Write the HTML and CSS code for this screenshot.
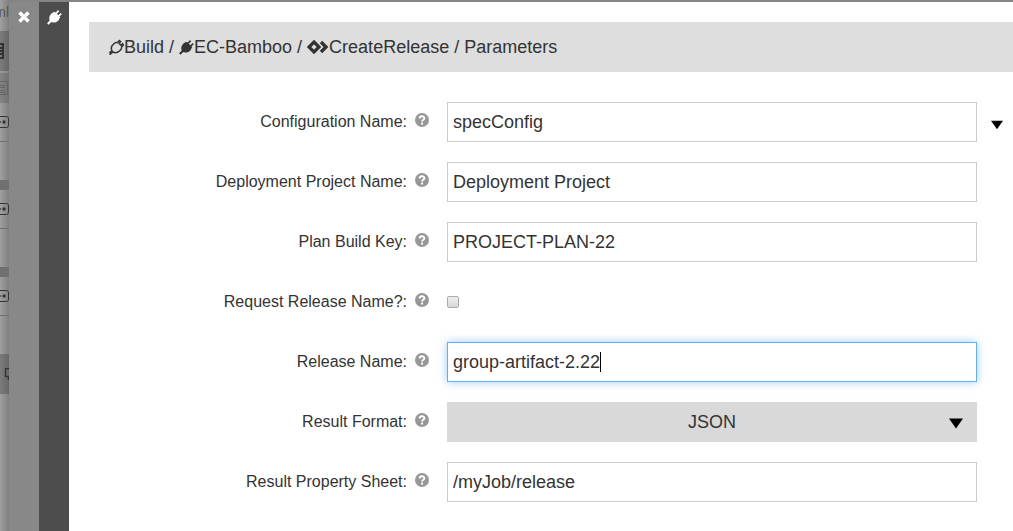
FILE: index.html
```html
<!DOCTYPE html>
<html lang="en">
<head>
<meta charset="utf-8">
<meta name="viewport" content="width=device-width, initial-scale=1">
<title>Parameters</title>
<link rel="stylesheet" href="styles.css">
</head>
<body>
<svg class="defs" aria-hidden="true">
  <symbol id="help" viewBox="0 0 14 14"><circle cx="7" cy="7" r="7" fill="#979797"/><path d="M4.6 5.4C4.6 2.5 9.4 2.5 9.4 5.2C9.4 6.8 7.1 6.7 7.1 8.6" fill="none" stroke="#fff" stroke-width="1.9"/><path d="M6.1 9.6h2v1.9h-2z" fill="#fff"/></symbol>
  <symbol id="plug" viewBox="0 0 15 16"><path d="M.8 15L4 11.8" fill="none" stroke="currentColor" stroke-width="2"/><path d="M3 12.8C1.8 9.8 2 7 4 5C5.3 3.6 6.5 3.2 7.7 3.4L12.5 8.3C12.5 9.8 12 11 10.8 12C8.7 13.9 5.6 13.9 3 12.8Z" fill="currentColor"/><path d="M8.8 4.8L11.6 1.6M11.2 7.4L14.3 4.6M7.3 3.3L12.7 8.7" fill="none" stroke="currentColor" stroke-width="1.6"/></symbol>
  <symbol id="down" viewBox="0 0 14 10"><path d="M0 0h14L7 10z"/></symbol>
</svg>
<div class="app">
  <div class="backdrop" aria-hidden="true">
    <div class="title">ml</div>
    <div class="tile"><svg class="list-icon" viewBox="0 0 9 16"><path d="M0 1H3V15H0M0 5H2M0 8H2M0 11H2" fill="none" stroke="#333" stroke-width="2"/></svg></div>
    <div class="tile tile-small"><svg class="list-icon" viewBox="0 0 9 16"><path d="M0 1.5H7.5V14.5H0M0 5.5H4.5V7.5H0M0 10.5H4.5V12.5H0" fill="none" stroke="#656565"/></svg></div>
    <div class="card"><div class="card-head"><svg viewBox="0 0 9 12"><path d="M0 .5H6.5Q8.5 .5 8.5 2.5V9.5Q8.5 11.5 6.5 11.5H0" fill="none" stroke="#333"/><circle cx="4" cy="6" r="1.7" fill="#333"/><path d="M0 5h1v2H0z" fill="#555"/></svg></div></div>
    <div class="card"><div class="card-head"><svg viewBox="0 0 9 12"><path d="M0 .5H6.5Q8.5 .5 8.5 2.5V9.5Q8.5 11.5 6.5 11.5H0" fill="none" stroke="#333"/><circle cx="4" cy="6" r="1.7" fill="#333"/><path d="M0 5h1v2H0z" fill="#555"/></svg></div></div>
    <div class="card card-last"><div class="card-head"><svg viewBox="0 0 9 12"><path d="M0 .5H6.5Q8.5 .5 8.5 2.5V9.5Q8.5 11.5 6.5 11.5H0" fill="none" stroke="#333"/><circle cx="4" cy="6" r="1.7" fill="#333"/><path d="M0 5h1v2H0z" fill="#555"/></svg></div></div>
    <div class="tile"><svg viewBox="0 0 9 12"><path d="M9 .5H5.5V8.5H8.5V12" fill="none" stroke="#333" stroke-width="1.4"/></svg></div>
  </div>
  <div class="rail">
    <button class="rail-button" type="button" aria-label="Close"><svg class="close-icon" viewBox="0 0 12 12"><path d="M1.5 1.5L10.5 10.5M10.5 1.5L1.5 10.5" stroke="#fff" stroke-width="3.4" fill="none"/></svg></button>
  </div>
  <div class="rail rail-dark">
    <button class="rail-button" type="button" aria-label="Plugin"><svg class="plug-icon"><use href="#plug"/></svg></button>
  </div>
  <main class="panel">
    <nav class="crumbs" aria-label="Breadcrumb">
      <a href="#build"><svg class="crumb-icon" viewBox="0 0 15 16"><path d="M1.2 15.2L1 13.2L3 11.9C1.6 9 2.4 6.8 4.6 5C5.8 3.6 7 3.2 8.4 3.6L10.4 1.6L11.6 2.6L10.2 4.6L12 6.2L13.6 4.6L14.4 6L12.6 8C12.8 9.8 11.8 11 10.4 12C8.5 13.8 6 14 4 13Z" fill="none" stroke="currentColor" stroke-width="1.5"/></svg>Build</a>&nbsp;/&nbsp;<a href="#plugin"><svg class="crumb-icon"><use href="#plug"/></svg>EC-Bamboo</a>&nbsp;/&nbsp;<a href="#procedure"><svg class="procedure-icon" viewBox="0 0 22 14"><path d="M7 2L12 7L7 12L2 7Z" fill="none" stroke="currentColor" stroke-width="3.2"/><path d="M14 2L19 7L14 12" fill="none" stroke="currentColor" stroke-width="3.4"/></svg>CreateRelease</a>&nbsp;/&nbsp;<span>Parameters</span>
    </nav>
    <form class="form">
      <div class="row">
        <label for="config">Configuration Name:</label><svg class="help"><use href="#help"/></svg>
        <input class="text" id="config" type="text" value="specConfig">
        <button class="open" type="button" aria-label="Choose configuration"><svg class="open-icon"><use href="#down"/></svg></button>
      </div>
      <div class="row">
        <label for="project">Deployment Project Name:</label><svg class="help"><use href="#help"/></svg>
        <input class="text" id="project" type="text" value="Deployment Project">
      </div>
      <div class="row">
        <label for="plan">Plan Build Key:</label><svg class="help"><use href="#help"/></svg>
        <input class="text" id="plan" type="text" value="PROJECT-PLAN-22">
      </div>
      <div class="row">
        <label for="request">Request Release Name?:</label><svg class="help"><use href="#help"/></svg>
        <input class="check" id="request" type="checkbox">
      </div>
      <div class="row">
        <label for="release">Release Name:</label><svg class="help"><use href="#help"/></svg>
        <div class="field"><input class="text active" id="release" type="text" value="group-artifact-2.22"><span class="caret"></span></div>
      </div>
      <div class="row">
        <label for="format">Result Format:</label><svg class="help"><use href="#help"/></svg>
        <div class="field"><select class="select" id="format"><option>JSON</option></select><svg class="select-icon"><use href="#down"/></svg></div>
      </div>
      <div class="row">
        <label for="sheet">Result Property Sheet:</label><svg class="help"><use href="#help"/></svg>
        <input class="text" id="sheet" type="text" value="/myJob/release">
      </div>
    </form>
  </main>
</div>
</body>
</html>
```
FILE: styles.css
```css
* { box-sizing: border-box; }
body {
  margin: 0;
  color: #333;
  font-family: "Liberation Sans", Arial, sans-serif;
  font-size: 16px;
}
svg { display: block; }
button { padding: 0; border: 0; background: none; }
.defs { position: absolute; width: 0; height: 0; }

.app {
  display: grid;
  grid-template-columns: 9px 30px 30px 1fr;
  min-height: 100vh;
}
.rail, .panel { border-top: 2px solid #848484; }

.backdrop {
  display: flex;
  flex-direction: column;
  overflow: hidden;
  background: linear-gradient(to right, #a0a0a0, #808080);
}
.backdrop svg { width: 9px; height: 12px; flex: none; }
.backdrop .list-icon { height: 16px; }
.title {
  display: flex;
  justify-content: flex-end;
  height: 31px;
  padding-top: 3px;
  font-size: 14px;
  line-height: 18px;
  color: #555;
}
.tile {
  display: flex;
  align-items: center;
  height: 40px;
  background: linear-gradient(to right, #7c7c7c, #666);
}
.tile-small {
  height: 30px;
  margin-top: 2px;
  background: linear-gradient(to right, #858585, #707070);
}
.card { height: 87px; border-bottom: 10px solid #707070; }
.card-last { height: 77px; border-bottom: 0; }
.card-head {
  display: flex;
  align-items: center;
  height: 39px;
  border-bottom: 1px solid #707070;
}

.rail { background: #888; }
.rail-dark { background: #4d4d4d; }
.rail-button {
  display: grid;
  place-items: center;
  width: 30px;
  height: 30px;
  color: #fff;
}
.close-icon { width: 12px; height: 12px; }
.plug-icon { width: 15px; height: 16px; }

.panel { padding: 20px 0 29px 20px; background: #fff; }
.crumbs {
  display: flex;
  align-items: center;
  height: 50px;
  padding-left: 20px;
  background: #dedede;
  font-size: 18px;
  white-space: nowrap;
}
.crumbs a {
  display: flex;
  align-items: center;
  color: inherit;
  text-decoration: none;
}
.crumb-icon { width: 15px; height: 16px; }
.procedure-icon { width: 22px; height: 14px; }

.form {
  display: grid;
  gap: 20px;
  padding-top: 30px;
}
.row {
  display: grid;
  grid-template-columns: 318px 14px 1fr 36px;
  align-items: center;
  height: 40px;
}
.row label { text-align: right; line-height: 18px; }
.help {
  width: 14px;
  height: 14px;
  margin: 0 0 4px 8px;
}
.text, .select {
  width: 100%;
  height: 40px;
  border: 1px solid #ccc;
  border-radius: 0;
  color: #333;
  font: inherit;
  font-size: 18px;
}
.row > .text, .row > .field, .row > .check { margin-left: 26px; }
.row > .text { width: auto; }
.text { padding: 0 5px; background: #fff; outline: none; }
.active { border-color: #66afe9; box-shadow: 0 0 8px rgba(82, 168, 236, 0.6); }
.field { position: relative; }
.caret {
  position: absolute;
  top: 10px;
  left: 153px;
  width: 1px;
  height: 20px;
  background: #000;
}
.select {
  display: block;
  padding: 0 20px;
  border: 0;
  background: #d9d9d9;
  appearance: none;
  text-align-last: center;
}
.select-icon {
  position: absolute;
  top: 16px;
  right: 14px;
  width: 14px;
  height: 11px;
  pointer-events: none;
}
.check {
  width: 12px;
  height: 12px;
  margin: 0;
  border: 1px solid #aaa;
  border-radius: 2px;
  background: linear-gradient(#eee, #d8d8d8);
  appearance: none;
}
.row > .check { justify-self: start; margin-left: 26px; }
.open { width: 12px; height: 10px; margin: 6px 0 0 14px; }
.open-icon { width: 12px; height: 10px; }
```
